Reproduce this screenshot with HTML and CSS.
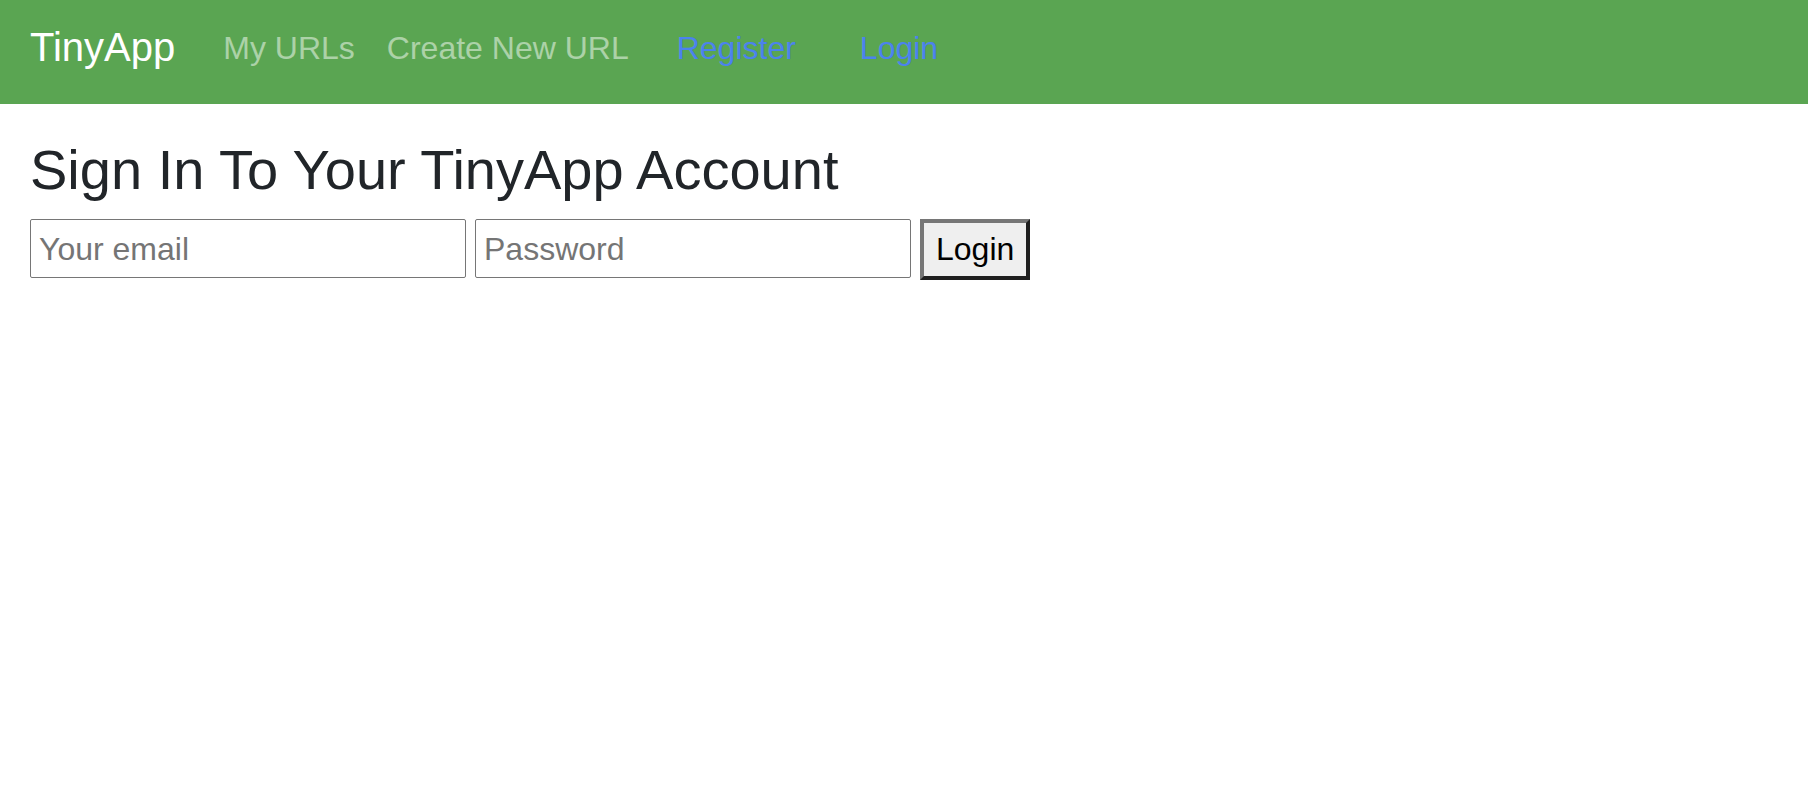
FILE: index.html
```html
<!DOCTYPE html>
<html lang="en">
<head>
<meta charset="utf-8">
<title>TinyApp - Login</title>
<link rel="stylesheet" href="styles.css">
</head>
<body>
<nav class="navbar">
  <a class="brand" href="#">TinyApp</a>
  <div class="nav-group">
    <a class="nav-link" href="#">My URLs</a>
    <a class="nav-link" href="#">Create New URL</a>
  </div>
  <div class="nav-group auth">
    <a class="nav-link auth-link" href="#">Register</a>
    <a class="nav-link auth-link login-link" href="#">Login</a>
  </div>
</nav>
<main class="content">
  <h3 class="title">Sign In To Your TinyApp Account</h3>
  <form class="login-form">
    <input class="field" type="text" placeholder="Your email">
    <input class="field" type="password" placeholder="Password">
    <button class="btn" type="button">Login</button>
  </form>
</main>
</body>
</html>
```
FILE: styles.css
```css
html, body {
  margin: 0;
  padding: 0;
  background: #ffffff;
  font-family: "Liberation Sans", Arial, sans-serif;
}

.navbar {
  display: flex;
  align-items: flex-start;
  height: 104px;
  padding-left: 30px;
  background: #5aa552;
  box-sizing: border-box;
}

.brand {
  margin-top: 24px;
  margin-right: 32px;
  font-size: 40px;
  line-height: 46px;
  color: #ffffff;
  text-decoration: none;
}

.nav-group {
  display: flex;
  margin-top: 30px;
}

.nav-link {
  padding: 0 16px;
  font-size: 32px;
  line-height: 37px;
  color: rgba(255, 255, 255, 0.5);
  text-decoration: none;
}

.auth {
  margin-left: 16px;
}

.auth-link {
  color: #4b82ee;
}

.login-link {
  margin-left: 32px;
}

.content {
  padding: 32px 30px 0;
}

.title {
  margin: 0 0 16px;
  font-size: 56px;
  font-weight: 400;
  line-height: 67px;
  color: #212529;
}

.login-form {
  display: flex;
  align-items: flex-start;
  gap: 9px;
}

.field {
  width: 436px;
  height: 59px;
  box-sizing: border-box;
  padding: 2px 8px 0;
  border: 1px solid #767676;
  border-radius: 2px;
  font-family: "Liberation Sans", Arial, sans-serif;
  font-size: 32px;
  color: #000000;
  background: #ffffff;
}

.field::placeholder {
  color: #757575;
}

.btn {
  height: 61px;
  box-sizing: border-box;
  padding: 0 12px;
  border: 4px solid;
  border-color: #767676 #1f1f1f #1f1f1f #767676;
  background: #efefef;
  font-family: "Liberation Sans", Arial, sans-serif;
  font-size: 32px;
  color: #000000;
}
```
